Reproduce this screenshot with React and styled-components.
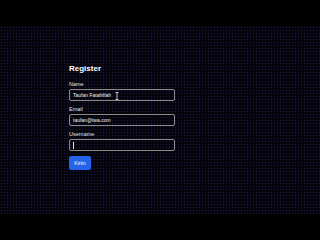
import React from 'react';
import styled, { createGlobalStyle } from 'styled-components';

const GlobalStyle = createGlobalStyle`
  html, body {
    margin: 0;
    padding: 0;
    background: #000;
  }
  body {
    font-family: "Liberation Sans", Arial, sans-serif;
  }
`;

const fields = [
  { id: 'name', label: 'Name', value: 'Taufan Fatahillah', pointer: true },
  { id: 'email', label: 'Email', value: 'taufan@twa.com' },
  { id: 'username', label: 'Username', value: '', caret: true },
];

const Page = styled.div`
  width: 100%;
  min-width: 240px;
  height: 240px;
  display: flex;
  flex-direction: column;
  background: #000;
  overflow: hidden;
`;

const Band = styled.div`
  height: 26px;
  flex-shrink: 0;
  background: #000;
`;

// dithered dark backdrop behind the form
const Main = styled.main`
  flex: 1;
  padding: 38px 0 0 69px;
  background-color: #04040a;
  background-image:
    radial-gradient(circle, #1c1c54 0.5px, transparent 0.7px),
    radial-gradient(circle, #26260f 0.5px, transparent 0.7px);
  background-size: 3px 3px, 4px 4px;
  background-position: 0 0, 1px 2px;
`;

const Form = styled.form`
  width: 106px;
  display: flex;
  flex-direction: column;
`;

const Title = styled.h1`
  margin: 0 0 7px;
  font-size: 8px;
  line-height: 10px;
  font-weight: 700;
  color: #fff;
`;

const Field = styled.div`
  display: flex;
  flex-direction: column;
  gap: 1px;
  margin-bottom: 5px;
`;

const Label = styled.label`
  font-size: 5.5px;
  line-height: 7px;
  color: #e2e2e2;
`;

const InputBox = styled.div`
  position: relative;
  height: 12px;
  box-sizing: border-box;
  border: 1px solid #8a8a8a;
  border-radius: 2px;
  padding: 0 3px;
  display: flex;
  align-items: center;
  font-size: 5px;
  color: #f2f2f2;
`;

const Caret = styled.span`
  display: inline-block;
  width: 1px;
  height: 7px;
  background: #e8e8e8;
`;

const Pointer = styled.svg`
  position: absolute;
  left: 45px;
  top: 2px;
`;

const Submit = styled.button`
  align-self: flex-start;
  width: 22px;
  height: 14px;
  padding: 0;
  border: none;
  border-radius: 2px;
  background: #2563eb;
  color: #fff;
  font-family: inherit;
  font-size: 5px;
`;

export default function App() {
  return (
    <>
      <GlobalStyle />
      <Page>
        <Band />
        <Main>
          <Form onSubmit={(e) => e.preventDefault()}>
            <Title>Register</Title>
            {fields.map((f) => (
              <Field key={f.id}>
                <Label htmlFor={f.id}>{f.label}</Label>
                <InputBox id={f.id}>
                  {f.value}
                  {f.caret && <Caret />}
                  {f.pointer && (
                    <Pointer width="4" height="8" viewBox="0 0 4 8">
                      <path d="M0.5 0.5h3M2 0.5v7M0.5 7.5h3" stroke="#e6e6e6" strokeWidth="0.8" fill="none" />
                    </Pointer>
                  )}
                </InputBox>
              </Field>
            ))}
            <Submit type="submit">Kirim</Submit>
          </Form>
        </Main>
        <Band />
      </Page>
    </>
  );
}
